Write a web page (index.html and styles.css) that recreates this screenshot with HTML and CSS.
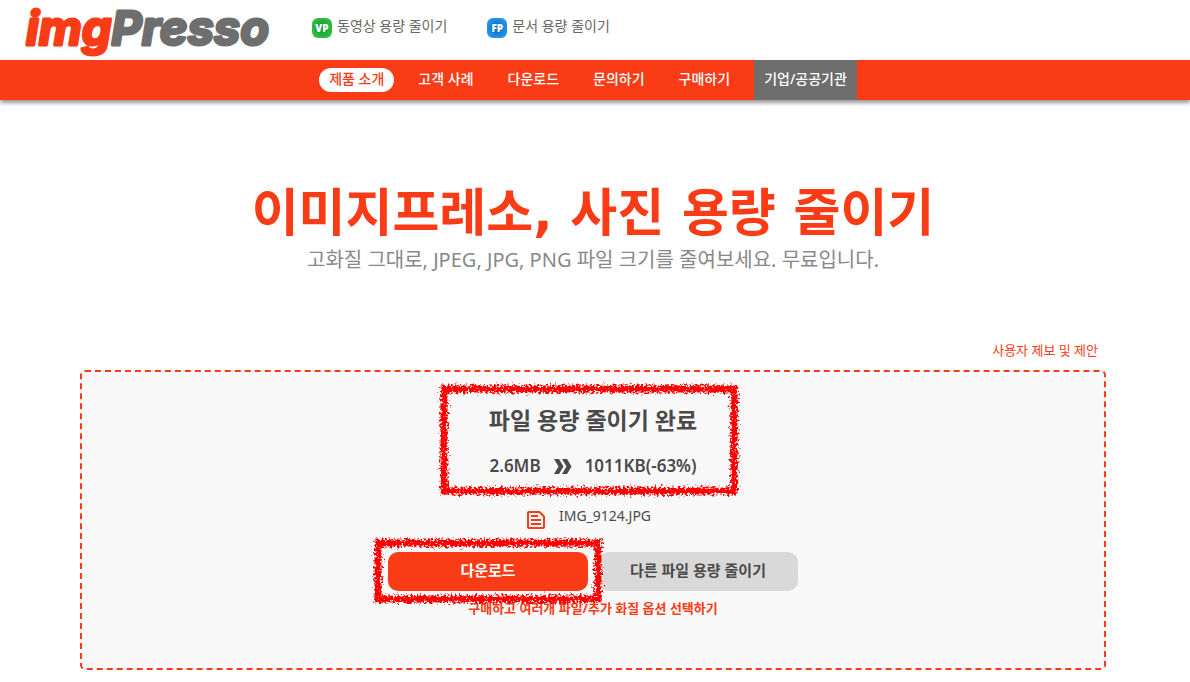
FILE: index.html
```html
<!DOCTYPE html>
<html lang="ko">
<head>
  <meta charset="UTF-8">
  <meta name="viewport" content="width=device-width, initial-scale=1.0">
  <title>이미지프레소, 사진 용량 줄이기</title>
  <link rel="stylesheet" href="styles.css">
</head>
<body>

<header class="header">
  <a class="logo" href="#" aria-label="imgPresso">
    <svg width="256" height="60" viewBox="0 0 256 60">
      <text x="2" y="45"><tspan class="logo-img">img</tspan><tspan class="logo-presso">Presso</tspan></text>
    </svg>
  </a>
  <a class="product" href="#">
    <span class="badge badge-green">VP</span>동영상 용량 줄이기
  </a>
  <a class="product" href="#">
    <span class="badge badge-blue">FP</span>문서 용량 줄이기
  </a>
</header>

<nav class="menu">
  <a class="active" href="#">제품 소개</a>
  <a href="#">고객 사례</a>
  <a href="#">다운로드</a>
  <a href="#">문의하기</a>
  <a href="#">구매하기</a>
  <a class="company" href="#">기업/공공기관</a>
</nav>

<main class="content">
  <h1>이미지프레소, 사진 용량 줄이기</h1>
  <p class="subtitle">고화질 그대로, JPEG, JPG, PNG 파일 크기를 줄여보세요. 무료입니다.</p>
  <a class="feedback" href="#">사용자 제보 및 제안</a>

  <section class="dropzone">
    <div class="result">
      <h2>파일 용량 줄이기 완료</h2>
      <div class="sizes">
        <span>2.6MB</span>
        <svg width="18" height="15" viewBox="0 0 18 15">
          <path d="M0 0h5l4.500 7.500L5 15H0l4.500-7.500zM8 0h5l4.500 7.500L13 15H8l4.500-7.500z" fill="#4a4a4a"/>
        </svg>
        <span>1011KB(-63%)</span>
      </div>
      <svg class="marker"><rect x="5" y="5" filter="url(#brush)"/></svg>
    </div>

    <div class="file">
      <svg width="18" height="18" viewBox="0 0 18 18" fill="none" stroke="#fa3c16" stroke-width="2">
        <path d="M2 1h10.500L17 5.500V16a1 1 0 0 1-1 1H2a1 1 0 0 1-1-1V2a1 1 0 0 1 1-1zM4 5h7M4 9h10M4 13h10"/>
      </svg>
      <span>IMG_9124.JPG</span>
    </div>

    <div class="buttons">
      <div class="download">
        <button class="btn btn-primary">다운로드</button>
        <svg class="marker"><rect x="5" y="5" filter="url(#brush)"/></svg>
      </div>
      <button class="btn btn-gray">다른 파일 용량 줄이기</button>
    </div>
    <a class="buy" href="#">구매하고 여러개 파일/추가 화질 옵션 선택하기</a>
  </section>
</main>

<!-- rough crayon edge for the markers -->
<svg class="defs" width="0" height="0">
  <filter id="brush" x="-5%" y="-10%" width="110%" height="120%">
    <feTurbulence type="fractalNoise" baseFrequency="0.45" numOctaves="3" seed="4" result="noise"/>
    <feDisplacementMap in="SourceGraphic" in2="noise" scale="11" xChannelSelector="R" yChannelSelector="G"/>
  </filter>
</svg>

</body>
</html>
```
FILE: styles.css
```css
* { box-sizing: border-box; }
body { margin: 0; background: #fff; color: #4a4a4a; font-family: "Noto Sans", "Noto Sans CJK KR", sans-serif; }
a { text-decoration: none; color: inherit; }

.header { display: flex; align-items: center; height: 60px; padding-left: 24px; }
.logo { display: block; height: 60px; margin-right: 32px; }
.logo svg { overflow: visible; }
.logo text { font-family: Inter, sans-serif; font-size: 47px; font-weight: 700; font-style: italic; stroke-width: 3px; stroke-linejoin: round; }
.logo-img { fill: #fa3c16; stroke: #fa3c16; }
.logo-presso { fill: #6e6e6e; stroke: #6e6e6e; }
.product { display: flex; align-items: center; gap: 5px; margin-right: 40px; padding-bottom: 8px; font-size: 14px; line-height: 20px; color: #666; }
.badge { width: 20px; height: 20px; margin-top: 4px; border-radius: 6px; font-size: 10px; font-weight: 900; text-align: center; color: #fff; }
.badge-green { background: radial-gradient(#138a43, #2fc13c 75%); }
.badge-blue { background: radial-gradient(#1264a8, #2196f3 75%); }

.menu { display: flex; justify-content: center; align-items: center; height: 40px; background: #fa3c16; box-shadow: 0 3px 4px rgba(0, 0, 0, 0.4); }
.menu a { margin-right: 14px; padding: 0 10px 2px; font-size: 14px; font-weight: 500; line-height: 22px; color: #fff; }
.menu .active { border-radius: 12px; background: #fff; color: #fa3c16; }
.menu .company { background: #6e6e6e; line-height: 38px; }

.content { display: flex; flex-direction: column; padding: 80px 84px 12px 80px; text-align: center; }
h1 { margin: 0; font-family: "DejaVu Sans", "Noto Sans CJK KR", sans-serif; font-size: 51px; line-height: 68px; color: #fa3c16; }
.subtitle { margin: 0; font-size: 20px; line-height: 24px; color: #888; }
.feedback { align-self: flex-end; margin: 68px 8px 10px 0; font-size: 13px; line-height: 20px; color: #fa3c16; }

.dropzone { display: flex; flex-direction: column; align-items: center; height: 300px; padding-top: 12px; border: 2px dashed #fa3c16; border-radius: 5px; background: #f9f9f9; }
.result { position: relative; width: 300px; height: 112px; padding: 20px 0; }
h2 { margin: 0; font-size: 23px; line-height: 32px; }
.sizes { display: flex; justify-content: center; align-items: center; gap: 13px; margin-top: 18px; font-size: 17px; font-weight: 600; line-height: 24px; }
.file { display: flex; gap: 14px; margin: 6px 8px 22px 0; font-size: 14px; line-height: 28px; }
.file svg { margin-top: 9px; }
.buttons { display: flex; gap: 10px; }
.download { position: relative; }
.btn { width: 200px; height: 39px; padding: 0 0 4px; border: none; border-radius: 10px; font-family: inherit; font-size: 15px; font-weight: 700; cursor: pointer; }
.btn-primary { background: #fa3c16; color: #fff; }
.btn-gray { background: #d9d9d9; color: #4a4a4a; }
.buy { margin-top: 7px; font-size: 13px; font-weight: 700; line-height: 20px; color: #fa3c16; }

.marker { position: absolute; top: 0; left: -4px; width: 300px; height: 112px; overflow: visible; pointer-events: none; }
.marker rect { width: calc(100% - 10px); height: calc(100% - 10px); fill: none; stroke: #f00; stroke-width: 7px; }
.download .marker { top: -14px; left: -15px; width: 230px; height: 66px; }
.defs { position: absolute; }
```
